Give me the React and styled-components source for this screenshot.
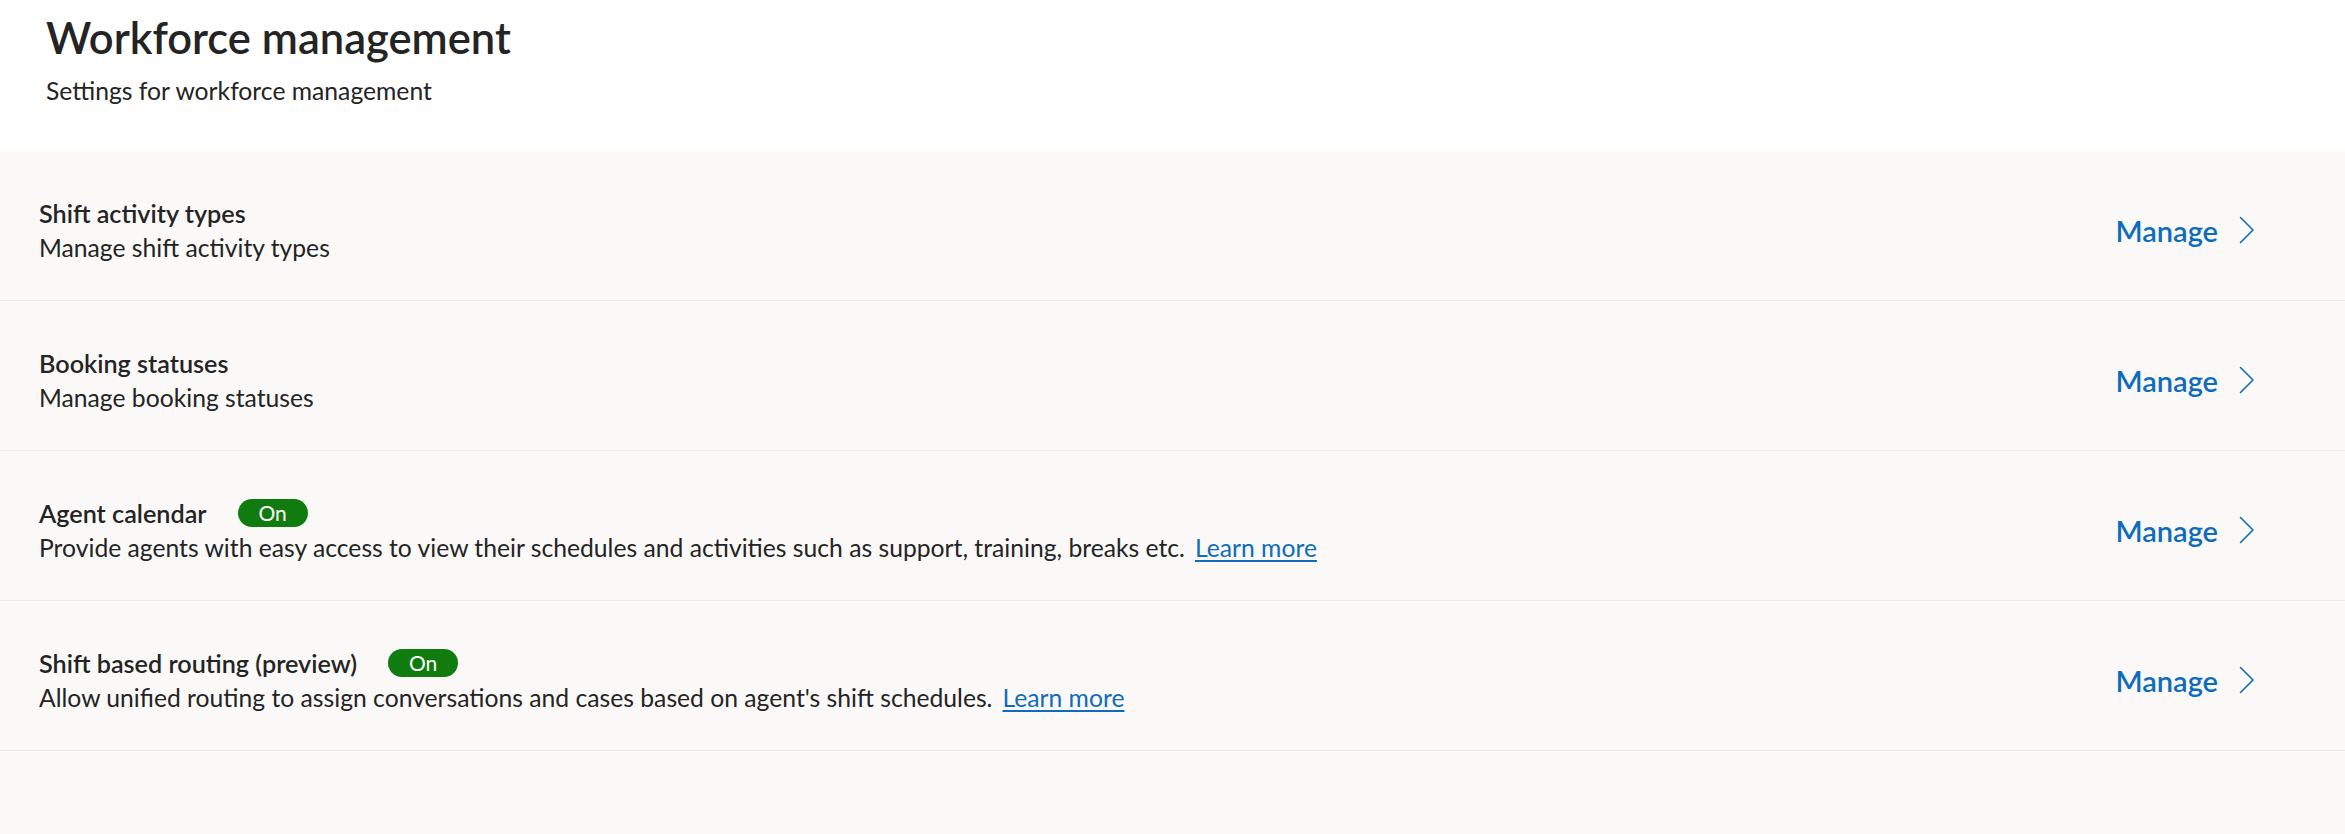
import React from 'react'
import styled, { createGlobalStyle } from 'styled-components'

const GlobalStyle = createGlobalStyle`
  html, body {
    margin: 0;
    padding: 0;
    background: #faf9f8;
    font-family: 'Segoe UI', Lato, 'Open Sans', sans-serif;
    color: #242424;
  }
`

const settings = [
  {
    title: 'Shift activity types',
    description: 'Manage shift activity types',
  },
  {
    title: 'Booking statuses',
    description: 'Manage booking statuses',
  },
  {
    title: 'Agent calendar',
    status: 'On',
    description:
      'Provide agents with easy access to view their schedules and activities such as support, training, breaks etc.',
    learnMore: true,
  },
  {
    title: 'Shift based routing (preview)',
    status: 'On',
    description:
      "Allow unified routing to assign conversations and cases based on agent's shift schedules.",
    learnMore: true,
  },
]

const Chevron = () => (
  <svg width='16' height='28' viewBox='0 0 16 28' fill='none'>
    <path
      d='M1.5 1.5 L14 14 L1.5 26.5'
      stroke='#0f6cbd'
      strokeWidth='1.6'
      strokeLinecap='round'
      strokeLinejoin='round'
    />
  </svg>
)

const App = () => {
  return (
    <Page>
      <GlobalStyle />
      <Header>
        <h1>Workforce management</h1>
        <p>Settings for workforce management</p>
      </Header>
      <List>
        {settings.map((item) => (
          <Row key={item.title}>
            <Info>
              <TitleLine>
                <RowTitle>{item.title}</RowTitle>
                {item.status && <Badge>{item.status}</Badge>}
              </TitleLine>
              <Description>
                {item.description}
                {item.learnMore && <LearnMore href='#'>Learn more</LearnMore>}
              </Description>
            </Info>
            <ManageLink href='#'>
              <span>Manage</span>
              <Chevron />
            </ManageLink>
          </Row>
        ))}
      </List>
    </Page>
  )
}

const Page = styled.div`
  min-height: 834px;
  background: #faf9f8;
`

const Header = styled.header`
  background: #ffffff;
  padding: 9px 46px 0;
  height: 142px;

  h1 {
    margin: 0;
    font-size: 43.5px;
    line-height: 56px;
    font-weight: 600;
    color: #242424;
  }

  p {
    margin: 11px 0 0;
    font-size: 24.7px;
    line-height: 30px;
    color: #242424;
  }
`

const List = styled.div`
  display: flex;
  flex-direction: column;
`

const Row = styled.div`
  display: flex;
  align-items: center;
  justify-content: space-between;
  box-sizing: border-box;
  height: 150px;
  padding: 9px 90px 0 39px;
  border-bottom: 1px solid #edebe9;
`

const Info = styled.div`
  display: flex;
  flex-direction: column;
  gap: 7px;
`

const TitleLine = styled.div`
  display: flex;
  align-items: center;
`

const RowTitle = styled.span`
  font-size: 25.2px;
  line-height: 28px;
  font-weight: 600;
`

const Badge = styled.span`
  margin-left: 31px;
  display: inline-flex;
  align-items: center;
  justify-content: center;
  width: 70px;
  height: 28px;
  border-radius: 14px;
  background: #107c10;
  color: #ffffff;
  font-size: 21px;
`

const Description = styled.div`
  font-size: 24.7px;
  line-height: 28px;
`

const LearnMore = styled.a`
  margin-left: 10px;
  color: #0f6cbd;
  text-decoration: underline;
  text-underline-offset: 3px;
`

const ManageLink = styled.a`
  display: flex;
  align-items: center;
  gap: 21px;
  color: #0f6cbd;
  text-decoration: none;
  font-size: 29px;
  font-weight: 600;
`

export default App
